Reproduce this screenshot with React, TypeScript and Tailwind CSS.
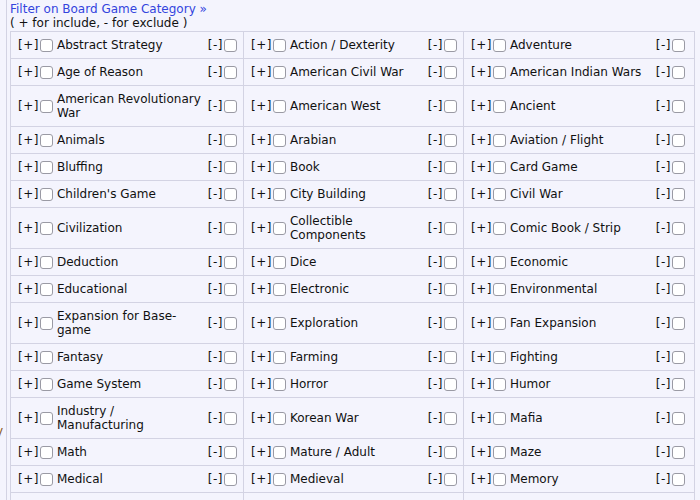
import React from "react";

const rows: [string, string, string][] = [
  ["Abstract Strategy", "Action / Dexterity", "Adventure"],
  ["Age of Reason", "American Civil War", "American Indian Wars"],
  ["American Revolutionary War", "American West", "Ancient"],
  ["Animals", "Arabian", "Aviation / Flight"],
  ["Bluffing", "Book", "Card Game"],
  ["Children's Game", "City Building", "Civil War"],
  ["Civilization", "Collectible Components", "Comic Book / Strip"],
  ["Deduction", "Dice", "Economic"],
  ["Educational", "Electronic", "Environmental"],
  ["Expansion for Base-game", "Exploration", "Fan Expansion"],
  ["Fantasy", "Farming", "Fighting"],
  ["Game System", "Horror", "Humor"],
  ["Industry / Manufacturing", "Korean War", "Mafia"],
  ["Math", "Mature / Adult", "Maze"],
  ["Medical", "Medieval", "Memory"],
  ["Miniatures", "Modern Warfare", "Movies / TV / Radio theme"],
];

function Box() {
  return (
    <span className="block w-[13px] h-[13px] ml-[1px] rounded-[3px] border border-[#9a9aa4] bg-white shrink-0" />
  );
}

function Cell({ name, last }: { name: string; last?: boolean }) {
  return (
    <div
      className={
        last
          ? "flex items-center pl-[7px] pr-[9px] py-[6px] border-r border-b border-[#d3d3e3] leading-[14px]"
          : "flex items-center pl-[7px] pr-[6px] py-[6px] border-r border-b border-[#d3d3e3] leading-[14px]"
      }
    >
      <span className="flex items-center shrink-0 h-[14px]">
        <span className="tracking-[0.5px]">[+]</span>
        <Box />
      </span>
      <span className="flex-1 ml-[4px] pr-[5px]">{name}</span>
      <span className="flex items-center shrink-0 h-[14px]">
        <span className="tracking-[0.5px]">[-]</span>
        <Box />
      </span>
    </div>
  );
}

export default function App() {
  return (
    <div
      className="relative w-[700px] h-[500px] overflow-hidden bg-[#f4f4fd] text-[#111] text-[12px]"
      style={{ fontFamily: '"DejaVu Sans", Verdana, sans-serif' }}
    >
      <span className="absolute left-[-4px] top-[424px] text-[#8a5a20] leading-[14px]">y</span>
      <div className="ml-[6px] h-full border-l border-[#d3d3e3] pl-[3px] pt-[2px]">
        <div className="leading-[14px] text-[#3344dd]">Filter on Board Game Category »</div>
        <div className="leading-[14px]">( + for include, - for exclude )</div>
        <div className="mt-[1px] grid grid-cols-[233px_220px_231px] w-[685px] border-t border-l border-[#d3d3e3]">
          {rows.map((r, i) => (
            <React.Fragment key={i}>
              <Cell name={r[0]} />
              <Cell name={r[1]} />
              <Cell name={r[2]} last />
            </React.Fragment>
          ))}
        </div>
      </div>
    </div>
  );
}
